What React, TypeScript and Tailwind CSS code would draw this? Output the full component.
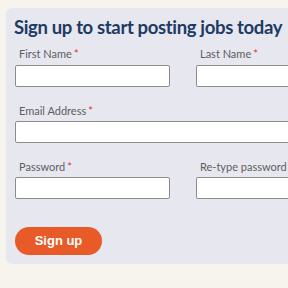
import React from "react";

function Label({ text, star = true, className = "" }: { text: string; star?: boolean; className?: string }) {
  return (
    <div className={"pl-1 text-[11px] leading-[14px] text-[#5e5e5e] " + className}>
      {text}
      {star && <span className="text-[#e0352b] ml-[2px]">*</span>}
    </div>
  );
}

function Input({ className = "" }: { className?: string }) {
  return <div className={"h-[22px] bg-white border border-[#8c8c8c] rounded-[2px] " + className} />;
}

export default function App() {
  return (
    <div className="w-[288px] h-[288px] overflow-hidden bg-[#f7f4ee] pt-[8px] pl-[6px]" style={{ fontFamily: "Lato, 'Noto Sans', sans-serif" }}>
      <div className="w-[300px] h-[256px] bg-[#e7e7f0] rounded-[6px] pl-[9px] pt-[7px]">
        <div className="text-[18.5px] leading-[24px] tracking-[-0.35px] font-bold text-[#1d3b63] whitespace-nowrap -ml-[1px]">
          Sign up to start posting jobs today
        </div>
        <div className="mt-[8px] flex gap-[26px]">
          <div className="w-[155px] shrink-0">
            <Label text="First Name" />
            <Input className="mt-[4px]" />
          </div>
          <div className="w-[155px] shrink-0">
            <Label text="Last Name" />
            <Input className="mt-[4px]" />
          </div>
        </div>
        <div className="mt-[17px]">
          <Label text="Email Address" />
          <Input className="mt-[3px] w-[300px]" />
        </div>
        <div className="mt-[17px] flex gap-[26px]">
          <div className="w-[155px] shrink-0">
            <Label text="Password" />
            <Input className="mt-[3px]" />
          </div>
          <div className="w-[155px] shrink-0">
            <Label text="Re-type password" star={false} />
            <Input className="mt-[3px]" />
          </div>
        </div>
        <button
          className="mt-[28px] w-[87px] h-[28px] rounded-full bg-[#e85a27] text-white text-[13px] font-bold"
          style={{ fontFamily: "'Liberation Sans', Arial, sans-serif" }}
        >
          Sign up
        </button>
      </div>
    </div>
  );
}
